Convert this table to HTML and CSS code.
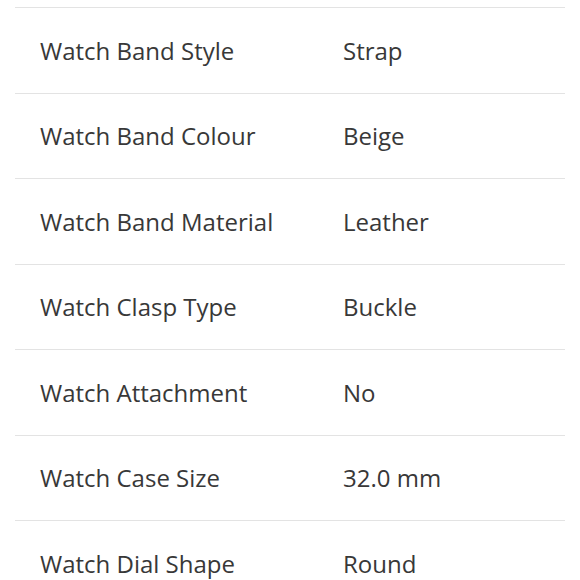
FILE: index.html
```html
<!DOCTYPE html>
<html>
<head>
<meta charset="utf-8">
<link rel="stylesheet" href="styles.css">
</head>
<body>
<div class="specs">
  <div class="row"><div class="label">Watch Band Style</div><div class="value">Strap</div></div>
  <div class="row"><div class="label">Watch Band Colour</div><div class="value">Beige</div></div>
  <div class="row"><div class="label">Watch Band Material</div><div class="value">Leather</div></div>
  <div class="row"><div class="label">Watch Clasp Type</div><div class="value">Buckle</div></div>
  <div class="row"><div class="label">Watch Attachment</div><div class="value">No</div></div>
  <div class="row"><div class="label">Watch Case Size</div><div class="value">32.0 mm</div></div>
  <div class="row"><div class="label">Watch Dial Shape</div><div class="value">Round</div></div>
</div>
</body>
</html>
```

FILE: styles.css
```css
html, body {
  margin: 0;
  padding: 0;
  background: #fff;
  overflow: hidden;
}
.specs {
  margin: 7px 15px 0 15px;
  font-family: "Open Sans", "DejaVu Sans", sans-serif;
  font-size: 24px;
  color: #383838;
}
.row {
  display: flex;
  align-items: center;
  height: 84.5px;
  border-top: 1.5px solid #e3e3e3;
}
.label {
  width: 303px;
  padding-left: 25px;
}
.value {
  flex: 1;
}
```
